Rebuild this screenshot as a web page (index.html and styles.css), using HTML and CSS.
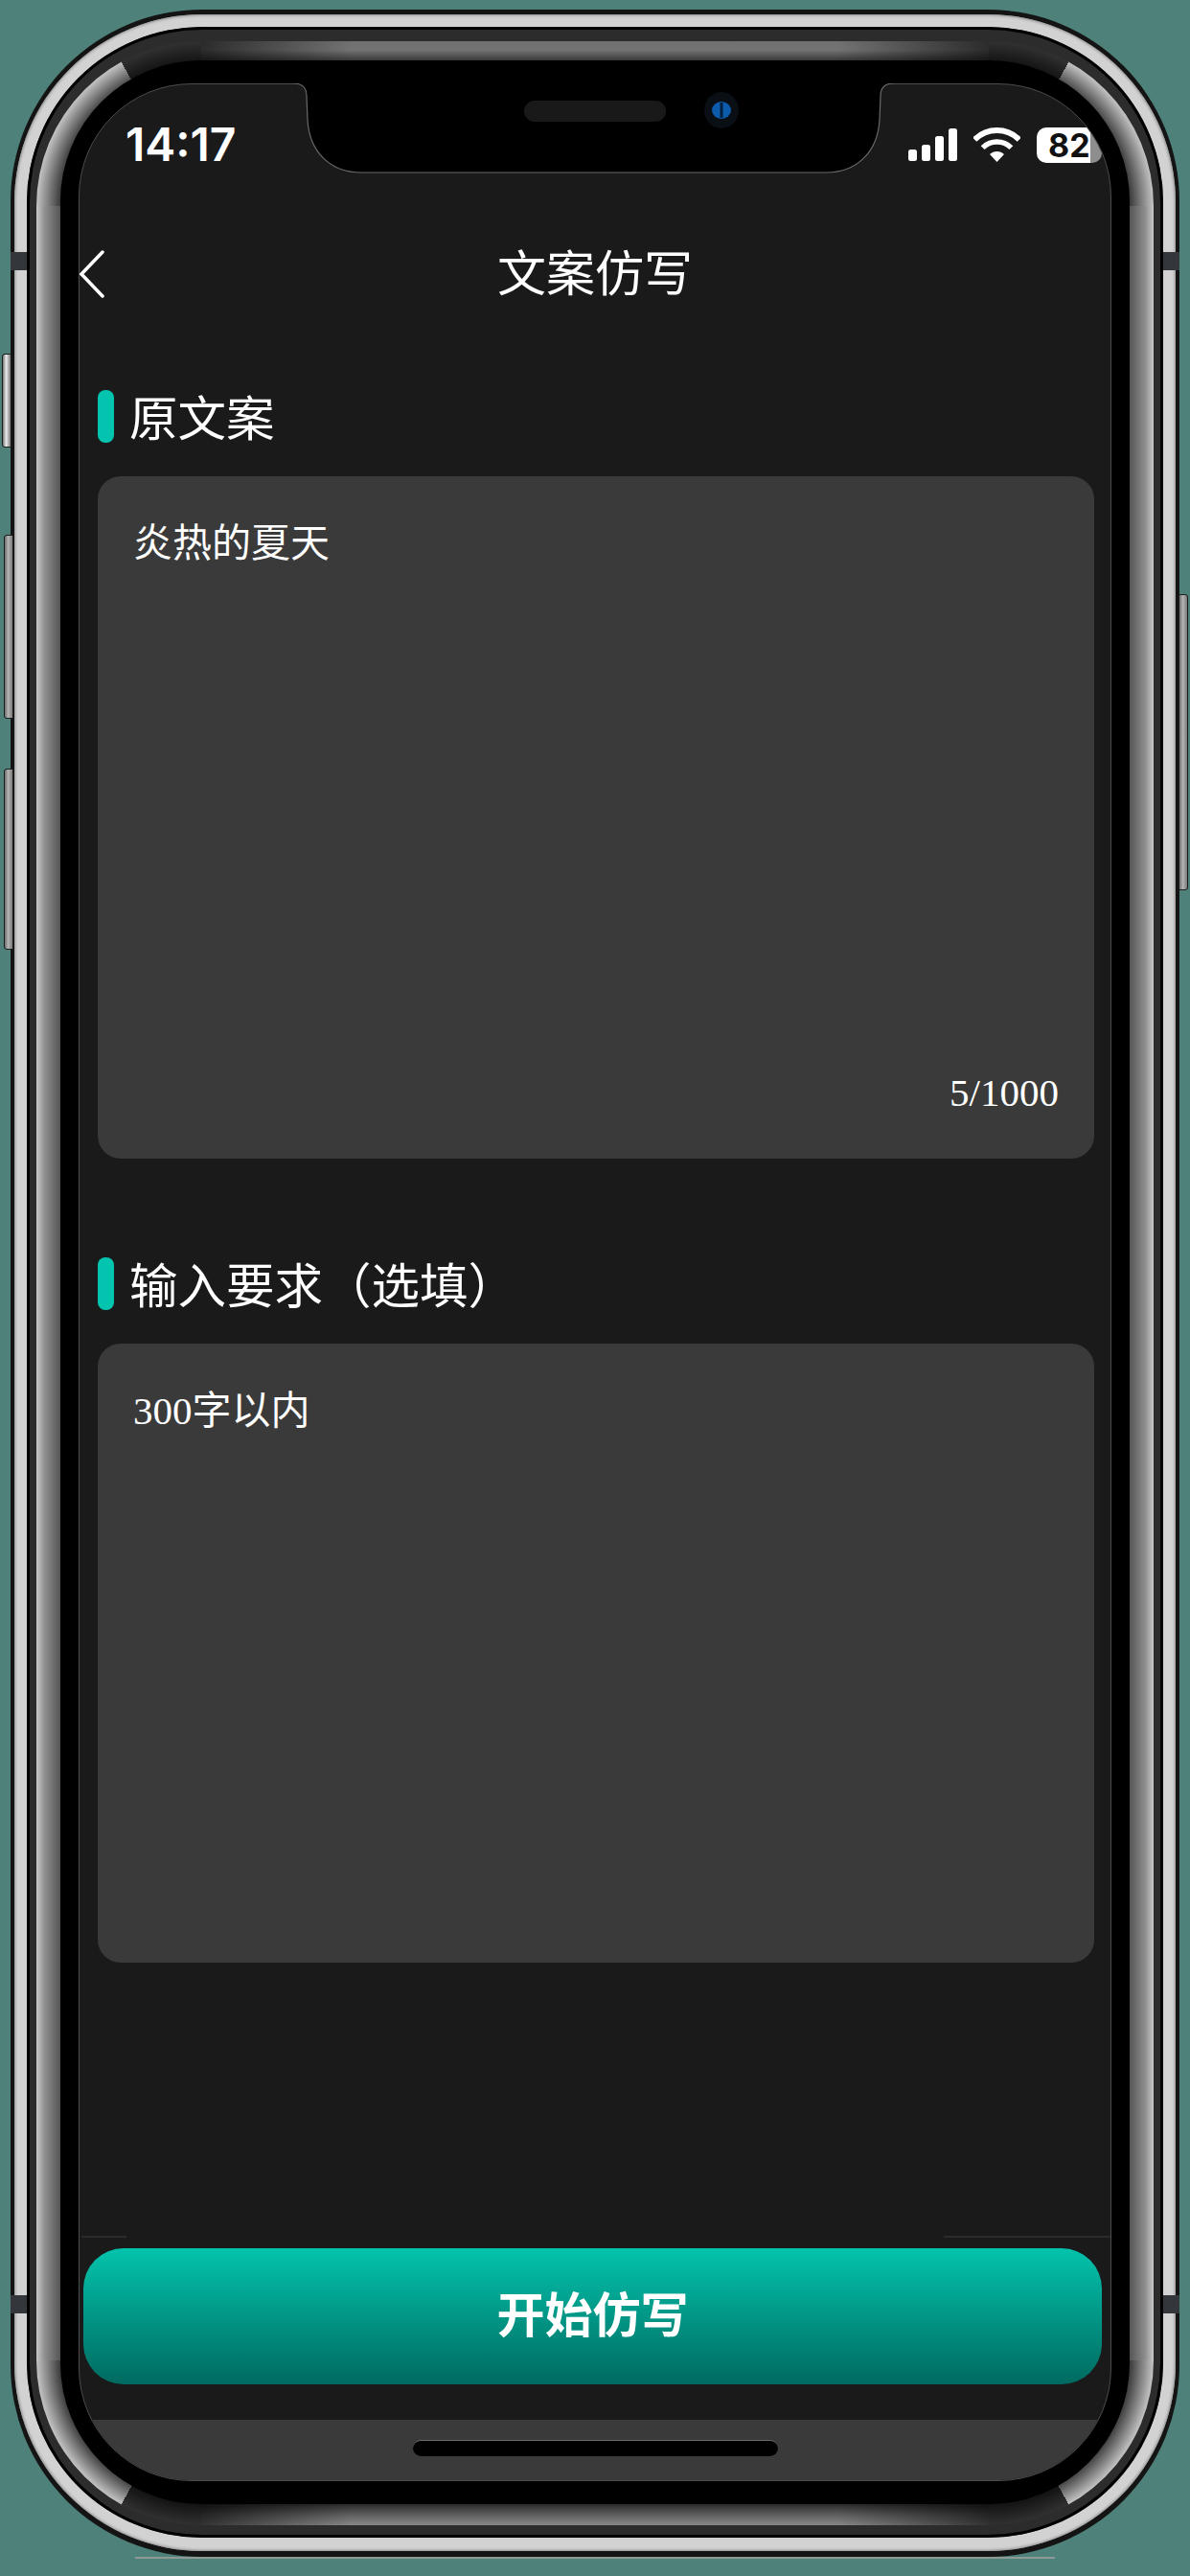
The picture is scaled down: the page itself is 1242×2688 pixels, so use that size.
FILE: index.html
```html
<!DOCTYPE html>
<html>
<head>
	<meta charset="UTF-8">
	<title>文案仿写</title>
	<link rel="stylesheet" href="styles.css">
</head>

<body>
	<div class="phone">
		<span class="side-btn btn-mute"></span>
		<span class="side-btn btn-vol-up"></span>
		<span class="side-btn btn-vol-down"></span>
		<span class="side-btn btn-power"></span>
		<span class="band band-left band-top"></span>
		<span class="band band-left band-bottom"></span>
		<span class="band band-right band-top"></span>
		<span class="band band-right band-bottom"></span>

		<div class="rim">
			<div class="gap">
				<div class="bevel">
					<div class="glass">
						<svg class="notch" viewBox="0 0 627 94" width="627" height="94">
							<path d="M0 0Q14 0 14 13L15 38C17 73 40 93 71 93L556 93C587 93 610 73 612 38L613 13Q613 0 627 0Z" fill="#000"/>
							<path d="M0 0Q14 0 14 13L15 38C17 73 40 93 71 93L556 93C587 93 610 73 612 38L613 13Q613 0 627 0" fill="none" stroke="#6a6a6a" stroke-width="1.2"/>
							<rect x="241" y="18" width="148" height="22" rx="11" fill="#191919"/>
							<ellipse cx="447" cy="28" rx="18" ry="19" fill="#0a0e15"/>
							<ellipse cx="447" cy="28" rx="10" ry="9" fill="#0d5cab"/>
							<rect x="445.5" y="20" width="3" height="16" fill="#04203f"/>
						</svg>

						<div class="screen">
							<div class="status-bar">
								<span class="time">14:17</span>
								<div class="status-icons">
									<svg class="signal" viewBox="0 0 51 34" width="51" height="34">
										<rect x="0" y="22" width="9" height="12" rx="2.5"/>
										<rect x="14" y="17" width="9" height="17" rx="2.5"/>
										<rect x="28" y="8" width="9" height="26" rx="2.5"/>
										<rect x="42" y="0" width="9" height="34" rx="2.5"/>
									</svg>
									<svg class="wifi" viewBox="0 0 49 36" width="49" height="36">
										<path d="M1.2 12.7A33 33 0 0 1 47.8 12.7" fill="none" stroke="#fff" stroke-width="6"/>
										<path d="M9.65 21.15A21 21 0 0 1 39.35 21.15" fill="none" stroke="#fff" stroke-width="5.5"/>
										<path d="M24.5 36L17 28A10.6 10.6 0 0 1 32 28Z" fill="#fff"/>
									</svg>
									<span class="battery">82</span>
								</div>
							</div>

							<div class="nav-bar">
								<svg class="back" viewBox="0 0 27 50" width="27" height="50">
									<polyline points="25,2 3,25 25,48" fill="none" stroke="#fff" stroke-width="3.5" stroke-linecap="round"/>
								</svg>
								<span class="nav-title">文案仿写</span>
							</div>

							<div class="content">
								<div class="section-head">
									<span class="section-mark"></span>
									<span class="section-title">原文案</span>
								</div>
								<div class="card card-source">
									<span class="card-text">炎热的夏天</span>
									<span class="card-count">5/1000</span>
								</div>

								<div class="section-head section-head-second">
									<span class="section-mark"></span>
									<span class="section-title">输入要求（选填）</span>
								</div>
								<div class="card card-demand">
									<span class="card-text">300字以内</span>
								</div>
							</div>

							<div class="footer">
								<div class="footer-line">
									<span class="line-left"></span>
									<span class="line-right"></span>
								</div>
								<div class="start-btn">开始仿写</div>
								<div class="home-area">
									<span class="home-bar"></span>
								</div>
							</div>
						</div>
					</div>
				</div>
			</div>
		</div>
	</div>
</body>
</html>
```

FILE: styles.css
```css
* {
	box-sizing: border-box;
}

body {
	margin: 0;
	width: 1242px;
	height: 2688px;
	overflow: hidden;
	background-color: #4d8179;
	font-family: "Noto Sans CJK SC", sans-serif;
	color: #fff;
}

/* phone body, each layer is one ring of the bezel */
.phone {
	position: relative;
	width: 1220px;
	margin: 10px 0 0 11px;
	padding: 5px 4px 6px;
	border-radius: 200px;
	background-color: #141414;
}

.phone::after {
	content: "";
	position: absolute;
	left: 130px;
	right: 130px;
	bottom: -2px;
	height: 2px;
	background-color: #8d9a96;
}

.rim {
	padding: 13px 13px 14px;
	border-radius: 196px;
	background-color: #d2d2d2;
	box-shadow: inset 0 0 3px 1px #8c8c8c;
}

.gap {
	padding: 15px 10px 13px;
	border-radius: 183px;
	background-color: #2c2c2c;
	box-shadow: inset 0 0 0 3px #000;
}

.bevel {
	padding: 20px 25px 22px;
	border-radius: 172px;
	background-color: #000;
	background-repeat: no-repeat;
	background-image:
		conic-gradient(from 270deg at 100% 100%, transparent 61deg, rgba(0, 0, 0, .75) 61deg),
		conic-gradient(from 0deg at 0 100%, rgba(0, 0, 0, .75) 29deg, transparent 29deg),
		conic-gradient(from 180deg at 100% 0, rgba(0, 0, 0, .75) 29deg, transparent 29deg),
		conic-gradient(from 90deg at 0 0, transparent 61deg, rgba(0, 0, 0, .75) 61deg),
		radial-gradient(circle at 100% 100%, #3a3a3a 147px, #c4c4c4 172px),
		radial-gradient(circle at 0 100%, #3a3a3a 147px, #c4c4c4 172px),
		radial-gradient(circle at 100% 0, #3a3a3a 147px, #c4c4c4 172px),
		radial-gradient(circle at 0 0, #3a3a3a 147px, #c4c4c4 172px),
		linear-gradient(90deg, rgba(0, 0, 0, .62) 172px, transparent 330px, transparent calc(100% - 330px), rgba(0, 0, 0, .62) calc(100% - 172px)),
		linear-gradient(90deg, rgba(0, 0, 0, .62) 172px, transparent 330px, transparent calc(100% - 330px), rgba(0, 0, 0, .62) calc(100% - 172px)),
		linear-gradient(180deg, #707070, #747474 45%, #3a3a3a),
		linear-gradient(0deg, #888, #5e5e5e 50%, #2a2a2a),
		linear-gradient(90deg, #c8c8c8, #8e8e8e 35%, #555),
		linear-gradient(270deg, #c8c8c8, #8e8e8e 35%, #555);
	background-size:
		172px 172px, 172px 172px, 172px 172px, 172px 172px,
		172px 172px, 172px 172px, 172px 172px, 172px 172px,
		100% 20px, 100% 22px, 100% 20px, 100% 22px,
		25px 100%, 25px 100%;
	background-position:
		0 0, 100% 0, 0 100%, 100% 100%,
		0 0, 100% 0, 0 100%, 100% 100%,
		0 0, 0 100%, 0 0, 0 100%,
		0 0, 100% 0;
}

.glass {
	position: relative;
	padding: 24px 19px;
	border-radius: 147px;
	background-color: #000;
}

.notch {
	position: absolute;
	top: 24px;
	left: 243px;
	display: block;
}

.screen {
	display: flex;
	flex-direction: column;
	width: 1078px;
	height: 2502px;
	overflow: hidden;
	border: 1px solid #4c4c4c;
	border-radius: 118px;
	background-color: #1a1a1a;
}

/* frame details */
.side-btn {
	position: absolute;
	width: 10px;
	border: 1px solid #1c1c1c;
	border-radius: 3px 0 0 3px;
	background: linear-gradient(90deg, #6d6d6d, #b4b4b4 45%, #7a7a7a);
}

.btn-mute {
	top: 359px;
	left: -9px;
	height: 98px;
	background: linear-gradient(90deg, #777, #ececec 45%, #777);
}

.btn-vol-up {
	top: 548px;
	left: -7px;
	height: 192px;
}

.btn-vol-down {
	top: 792px;
	left: -7px;
	height: 189px;
}

.btn-power {
	top: 610px;
	right: -9px;
	height: 309px;
	border-radius: 0 3px 3px 0;
}

.band {
	position: absolute;
	width: 17px;
	height: 19px;
	background-color: #33363a;
}

.band-left {
	left: 0;
}

.band-right {
	right: 0;
}

.band-top {
	top: 253px;
}

.band-bottom {
	top: 2385px;
}

/* status bar */
.status-bar {
	display: flex;
	flex: none;
	justify-content: space-between;
	align-items: flex-start;
	height: 128px;
	padding: 45px 9px 0 48px;
}

.time {
	font-family: Inter, sans-serif;
	font-size: 48px;
	font-weight: 600;
	line-height: 36px;
}

.status-icons {
	display: flex;
	align-items: flex-start;
	gap: 17px;
}

.signal {
	display: block;
	margin-top: 1px;
	fill: #fff;
}

.wifi {
	display: block;
}

.battery {
	width: 68px;
	height: 37px;
	padding-left: 12px;
	border-radius: 10px;
	background: linear-gradient(90deg, #fff 56px, #8e8e8e 56px);
	color: #111;
	font-family: Inter, sans-serif;
	font-size: 34px;
	font-weight: 700;
	line-height: 37px;
	white-space: nowrap;
}

/* title bar */
.nav-bar {
	position: relative;
	display: flex;
	flex: none;
	justify-content: center;
	align-items: center;
	height: 134px;
}

.back {
	position: absolute;
	left: -1px;
	top: 45px;
}

.nav-title {
	padding-bottom: 2px;
	font-size: 51px;
	line-height: 60px;
}

/* form */
.content {
	padding: 57px 17px 0 19px;
}

.section-head {
	display: flex;
	align-items: center;
	gap: 16px;
	height: 55px;
	font-size: 50.5px;
	line-height: 54px;
}

.section-title {
	padding-bottom: 4px;
}

.section-mark {
	width: 17px;
	height: 55px;
	border-radius: 8px;
	background-color: #03c4ae;
}

.section-head-second {
	margin-top: 103px;
}

.card {
	display: flex;
	flex-direction: column;
	justify-content: space-between;
	margin-top: 35px;
	padding: 46px 37px 45px;
	border-radius: 24px;
	background-color: #3a3a3a;
	font-family: "Liberation Serif", "Noto Sans CJK SC", serif;
	font-size: 41px;
	line-height: 48px;
}

.card-source {
	height: 712px;
}

.card-demand {
	height: 646px;
}

.card-count {
	align-self: flex-end;
}

/* bottom */
.footer {
	margin-top: auto;
}

.footer-line {
	display: flex;
	justify-content: space-between;
	height: 13px;
	padding-left: 2px;
}

.line-left,
.line-right {
	height: 2px;
	background-color: #2b2b2b;
}

.line-left {
	width: 47px;
}

.line-right {
	width: 174px;
}

.start-btn {
	height: 142px;
	margin: 0 9px 0 4px;
	padding-bottom: 7px;
	border-radius: 42px;
	background: linear-gradient(180deg, #03c3ac, #006a60);
	font-size: 50px;
	font-weight: 700;
	line-height: 133px;
	text-align: center;
}

.home-area {
	display: flex;
	justify-content: center;
	height: 63px;
	margin-top: 37px;
	padding-top: 21px;
	background-color: #3a3a3a;
}

.home-bar {
	width: 381px;
	height: 17px;
	border-top: 1px solid #6c6c6c;
	border-radius: 9px;
	background-color: #000;
}
```
